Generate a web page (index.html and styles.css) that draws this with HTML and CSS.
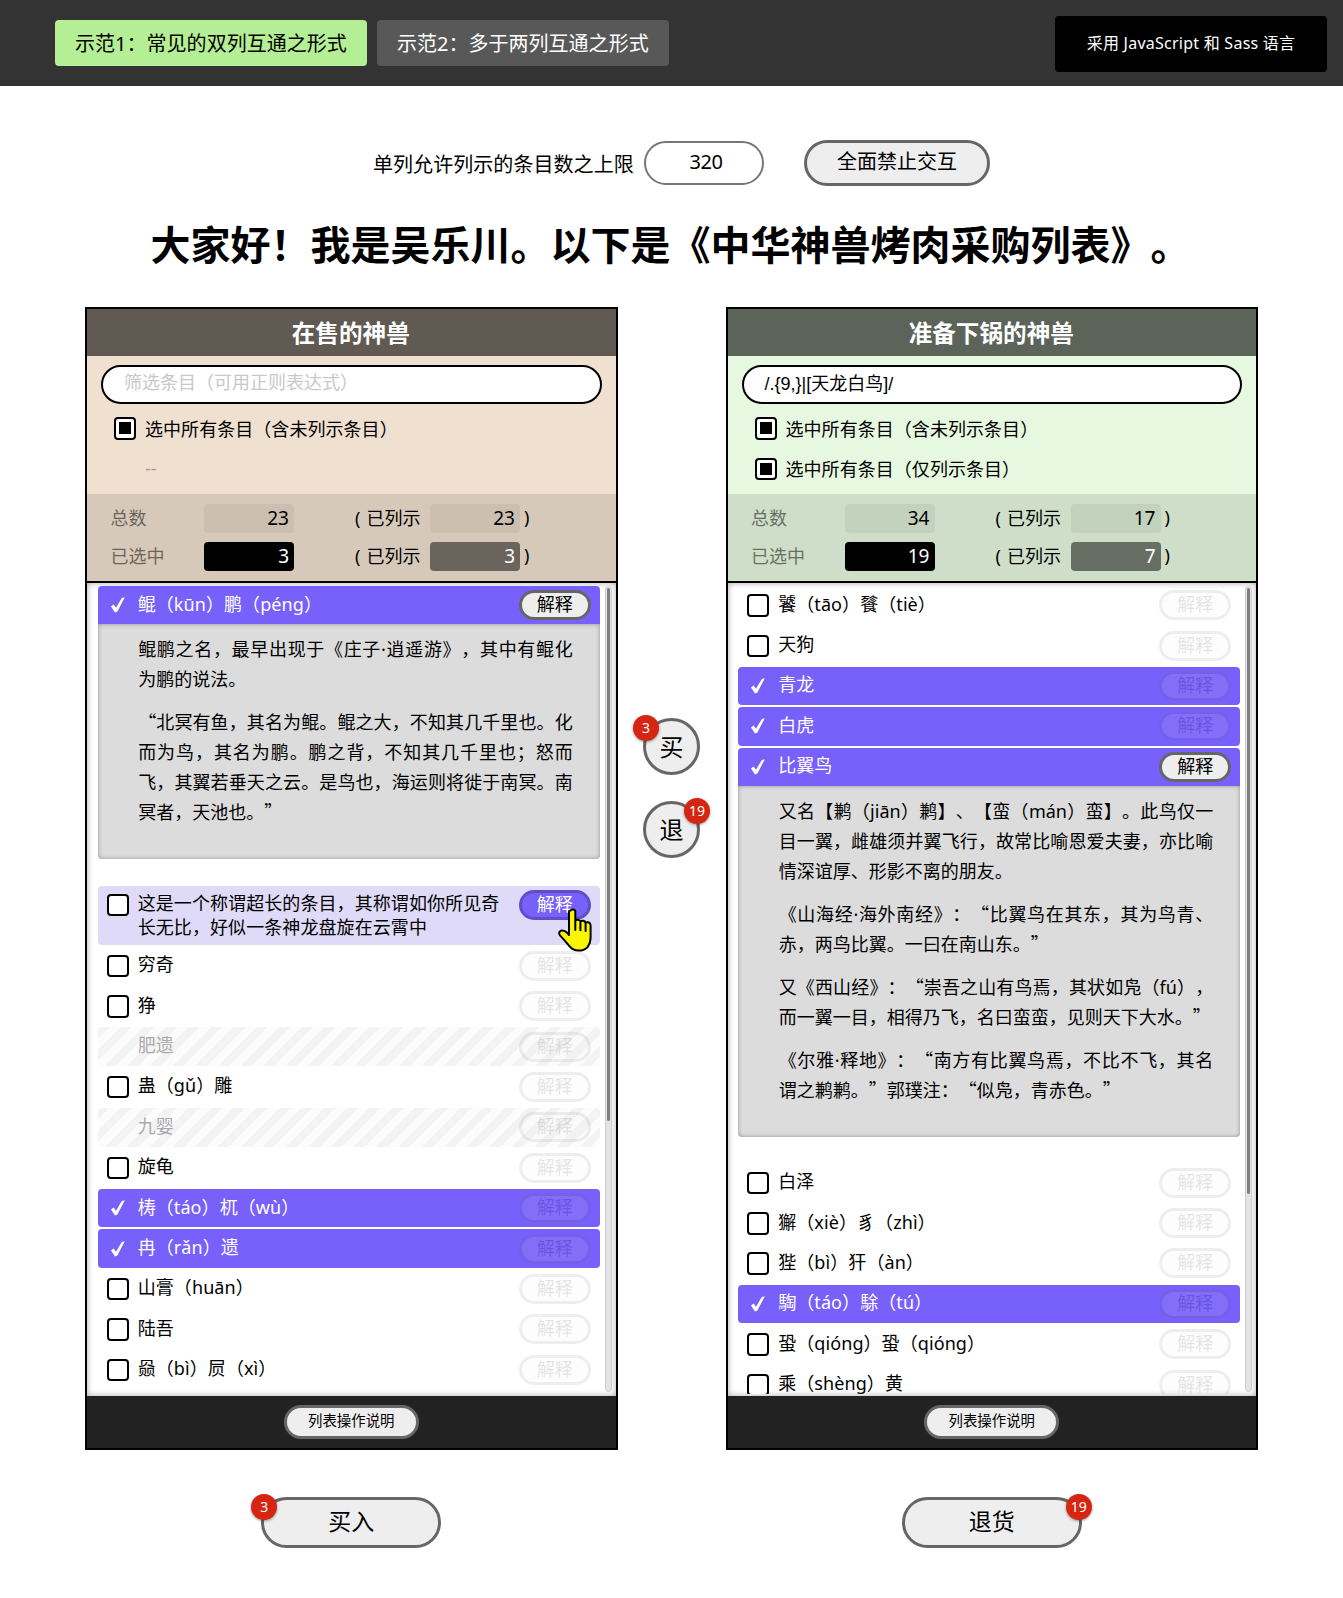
FILE: index.html
```html
<!DOCTYPE html>
<html lang="zh-CN">
<head>
<meta charset="utf-8">
<title>双列互通列表</title>
<link rel="stylesheet" href="styles.css">
</head>
<body>
<header class="topbar">
  <nav class="tabs">
    <a class="tab tab-active">示范1：常见的双列互通之形式</a>
    <a class="tab">示范2：多于两列互通之形式</a>
  </nav>
  <div class="tech">采用 JavaScript 和 Sass 语言</div>
</header>

<main>
  <div class="settings">
    <span class="settings-label">单列允许列示的条目数之上限</span>
    <div class="limit">320</div>
    <div class="pill toggle">全面禁止交互</div>
  </div>
  <h1 class="headline">大家好！我是吴乐川。以下是《中华神兽烤肉采购列表》。</h1>

  <div class="lists">
    <section class="column">
      <div class="panel panel-source">
        <h2 class="panel-title">在售的神兽</h2>
        <div class="filter">
          <div class="search search-empty">筛选条目（可用正则表达式）</div>
          <div class="check-all"><i class="box box-some"></i><span>选中所有条目（含未列示条目）</span></div>
          <div class="check-all check-none"><i class="box box-hidden"></i><span>--</span></div>
        </div>
        <div class="stats">
          <div class="stat"><span class="stat-name">总数</span><b class="num">23</b><span class="stat-sub">( 已列示</span><b class="num">23</b><span class="close">)</span></div>
          <div class="stat"><span class="stat-name">已选中</span><b class="num num-dark">3</b><span class="stat-sub">( 已列示</span><b class="num num-mid">3</b><span class="close">)</span></div>
        </div>
        <div class="list-area">
          <ul class="list">
            <li class="item selected expanded"><svg class="tick" viewBox="0 0 14 16"><path d="M0 9.6 L2.6 7.6 L5 10.8 L10.8 1 L13.8 0.2 L6.4 14.6 L4 15.6 Z"/></svg><span class="name">鲲（kūn）鹏（péng）</span><span class="pill explain">解释</span></li>
            <li class="desc">
              <p>鲲鹏之名，最早出现于《庄子<span class="latin">·</span>逍遥游》，其中有鲲化为鹏的说法。</p>
              <p>“北冥有鱼，其名为鲲。鲲之大，不知其几千里也。化而为鸟，其名为鹏。鹏之背，不知其几千里也；怒而飞，其翼若垂天之云。是鸟也，海运则将徙于南冥。南冥者，天池也。”</p>
            </li>
            <li class="item hover"><i class="box"></i><span class="name">这是一个称谓超长的条目，其称谓如你所见奇长无比，好似一条神龙盘旋在云霄中</span><span class="pill explain">解释<svg class="pointer" viewBox="0 0 34 44"><path d="M13 2.2 C13.8 1.2 16.6 1.2 17.3 3.2 L17.3 12.5 C18.5 11.4 21.5 11.5 22.4 13.4 C24 12.2 26.8 12.6 27.6 14.6 C29.5 13.6 32.6 14.4 32.6 17.5 L32.6 30 C32.6 34 31.5 36.5 29.8 38.8 C27.5 41.6 24 42.6 20.5 42.6 C16.5 42.6 13.6 41 11.4 38.2 C8.4 34.4 5.4 31 2 27.4 C0.2 25.2 1.5 22.4 4.4 22.6 C7 22.8 9 24.6 11 27 L11 4.2 C11 3.2 12 2.4 13 2.2 Z M17.3 12.5 V22 M22.4 13.4 V22.3 M27.6 14.6 V23"/></svg></span></li>
            <li class="item"><i class="box"></i><span class="name">穷奇</span><span class="pill explain">解释</span></li>
            <li class="item"><i class="box"></i><span class="name">狰</span><span class="pill explain">解释</span></li>
            <li class="item disabled"><i class="box box-hidden"></i><span class="name">肥遗</span><span class="pill explain">解释</span></li>
            <li class="item"><i class="box"></i><span class="name">蛊（gǔ）雕</span><span class="pill explain">解释</span></li>
            <li class="item disabled"><i class="box box-hidden"></i><span class="name">九婴</span><span class="pill explain">解释</span></li>
            <li class="item"><i class="box"></i><span class="name">旋龟</span><span class="pill explain">解释</span></li>
            <li class="item selected"><svg class="tick" viewBox="0 0 14 16"><path d="M0 9.6 L2.6 7.6 L5 10.8 L10.8 1 L13.8 0.2 L6.4 14.6 L4 15.6 Z"/></svg><span class="name">梼（táo）杌（wù）</span><span class="pill explain">解释</span></li>
            <li class="item selected"><svg class="tick" viewBox="0 0 14 16"><path d="M0 9.6 L2.6 7.6 L5 10.8 L10.8 1 L13.8 0.2 L6.4 14.6 L4 15.6 Z"/></svg><span class="name">冉（rǎn）遗</span><span class="pill explain">解释</span></li>
            <li class="item"><i class="box"></i><span class="name">山膏（huān）</span><span class="pill explain">解释</span></li>
            <li class="item"><i class="box"></i><span class="name">陆吾</span><span class="pill explain">解释</span></li>
            <li class="item"><i class="box"></i><span class="name">赑（bì）屃（xì）</span><span class="pill explain">解释</span></li>
          </ul>
          <div class="track"><div class="thumb" style="height:66.4%"></div></div>
        </div>
        <footer class="panel-foot"><span class="pill help">列表操作说明</span></footer>
      </div>
      <div class="pill action">买入<span class="badge badge-left">3</span></div>
    </section>

    <div class="transfer">
      <div class="round">买<span class="badge badge-left">3</span></div>
      <div class="round">退<span class="badge badge-right">19</span></div>
    </div>

    <section class="column">
      <div class="panel panel-target">
        <h2 class="panel-title">准备下锅的神兽</h2>
        <div class="filter">
          <div class="search">/.{9,}|[天龙白鸟]/</div>
          <div class="check-all"><i class="box box-some"></i><span>选中所有条目（含未列示条目）</span></div>
          <div class="check-all"><i class="box box-some"></i><span>选中所有条目（仅列示条目）</span></div>
        </div>
        <div class="stats">
          <div class="stat"><span class="stat-name">总数</span><b class="num">34</b><span class="stat-sub">( 已列示</span><b class="num">17</b><span class="close">)</span></div>
          <div class="stat"><span class="stat-name">已选中</span><b class="num num-dark">19</b><span class="stat-sub">( 已列示</span><b class="num num-mid">7</b><span class="close">)</span></div>
        </div>
        <div class="list-area">
          <ul class="list">
            <li class="item"><i class="box"></i><span class="name">饕（tāo）餮（tiè）</span><span class="pill explain">解释</span></li>
            <li class="item"><i class="box"></i><span class="name">天狗</span><span class="pill explain">解释</span></li>
            <li class="item selected"><svg class="tick" viewBox="0 0 14 16"><path d="M0 9.6 L2.6 7.6 L5 10.8 L10.8 1 L13.8 0.2 L6.4 14.6 L4 15.6 Z"/></svg><span class="name">青龙</span><span class="pill explain">解释</span></li>
            <li class="item selected"><svg class="tick" viewBox="0 0 14 16"><path d="M0 9.6 L2.6 7.6 L5 10.8 L10.8 1 L13.8 0.2 L6.4 14.6 L4 15.6 Z"/></svg><span class="name">白虎</span><span class="pill explain">解释</span></li>
            <li class="item selected expanded"><svg class="tick" viewBox="0 0 14 16"><path d="M0 9.6 L2.6 7.6 L5 10.8 L10.8 1 L13.8 0.2 L6.4 14.6 L4 15.6 Z"/></svg><span class="name">比翼鸟</span><span class="pill explain">解释</span></li>
            <li class="desc">
              <p>又名【鹣（<span class="latin">jiān</span>）鹣】、【蛮（<span class="latin">mán</span>）蛮】。此鸟仅一目一翼，雌雄须并翼飞行，故常比喻恩爱夫妻，亦比喻情深谊厚、形影不离的朋友。</p>
              <p>《山海经<span class="latin">·</span>海外南经》：“比翼鸟在其东，其为鸟青、赤，两鸟比翼。一曰在南山东。”</p>
              <p>又《西山经》：“崇吾之山有鸟焉，其状如凫（<span class="latin">fú</span>），而一翼一目，相得乃飞，名曰蛮蛮，见则天下大水。”</p>
              <p>《尔雅<span class="latin">·</span>释地》：“南方有比翼鸟焉，不比不飞，其名谓之鹣鹣。”郭璞注：“似凫，青赤色。”</p>
            </li>
            <li class="item"><i class="box"></i><span class="name">白泽</span><span class="pill explain">解释</span></li>
            <li class="item"><i class="box"></i><span class="name">獬（xiè）豸（zhì）</span><span class="pill explain">解释</span></li>
            <li class="item"><i class="box"></i><span class="name">狴（bì）犴（àn）</span><span class="pill explain">解释</span></li>
            <li class="item selected"><svg class="tick" viewBox="0 0 14 16"><path d="M0 9.6 L2.6 7.6 L5 10.8 L10.8 1 L13.8 0.2 L6.4 14.6 L4 15.6 Z"/></svg><span class="name">騊（táo）駼（tú）</span><span class="pill explain">解释</span></li>
            <li class="item"><i class="box"></i><span class="name">蛩（qióng）蛩（qióng）</span><span class="pill explain">解释</span></li>
            <li class="item"><i class="box"></i><span class="name">乘（shèng）黄</span><span class="pill explain">解释</span></li>
          </ul>
          <div class="track"><div class="thumb" style="height:75.6%"></div></div>
        </div>
        <footer class="panel-foot"><span class="pill help">列表操作说明</span></footer>
      </div>
      <div class="pill action">退货<span class="badge badge-right">19</span></div>
    </section>
  </div>
</main>
</body>
</html>
```
FILE: styles.css
```css
* { box-sizing: border-box; }

body {
  margin: 0;
  background: #fff;
  color: #000;
  font-family: "Noto Sans", "Noto Sans CJK SC", sans-serif;
  font-size: 18px;
  text-spacing-trim: space-all;
}

.topbar {
  height: 86px;
  padding: 0 16px 0 55px;
  display: flex;
  align-items: center;
  justify-content: space-between;
  background: #333;
  color: #fff;
}

.tabs { display: flex; gap: 10px; }

.tab {
  height: 46px;
  padding: 0 20px;
  border-radius: 4px;
  background: #585858;
  font-size: 20px;
  line-height: 47px;
  letter-spacing: 0.03px;
}

.tab-active { background: #b5ef95; color: #000; }

.tech {
  width: 272px;
  height: 56px;
  margin-top: 2px;
  border-radius: 4px;
  background: #000;
  font-size: 16px;
  line-height: 55px;
  text-align: center;
  letter-spacing: 0.25px;
}

.pill {
  border: 3px solid #666;
  border-radius: 30px;
  background: #eee;
  color: #000;
  text-align: center;
}

.settings {
  padding: 54px 0 0 373px;
  display: flex;
  align-items: center;
  font-size: 20px;
}

.settings-label { width: 271px; letter-spacing: 0.06px; }

.limit {
  width: 120px;
  height: 44px;
  padding-left: 4px;
  border: 2px solid #767676;
  border-radius: 22px;
  line-height: 38px;
  text-align: center;
  letter-spacing: -0.5px;
}

.toggle {
  width: 186px;
  height: 46px;
  margin-left: 40px;
  line-height: 37px;
}

.headline {
  height: 121px;
  margin: 0;
  padding-right: 2px;
  font-size: 40px;
  font-weight: 700;
  line-height: 117px;
  text-align: center;
}

.lists {
  width: 1173px;
  margin: 0 auto;
  display: flex;
  justify-content: space-between;
}

.column {
  width: 532.5px;
  display: flex;
  flex-direction: column;
  align-items: center;
}

.panel { width: 100%; border: 2px solid #000; }

.panel-source { background: #f0e0d0; }
.panel-target { background: #e6f8df; }

.panel-title {
  height: 47px;
  margin: 0;
  padding-right: 1px;
  background: rgba(0, 0, 0, 0.6);
  color: #fff;
  font-size: 23.6px;
  font-weight: 700;
  line-height: 48px;
  text-align: center;
}

.filter { height: 138px; padding: 9px 14px 0; }

.search {
  height: 39px;
  margin-bottom: 4px;
  padding-left: 21px;
  border: 2px solid #000;
  border-radius: 20px;
  background: #fff;
  font-family: "Liberation Sans", "Noto Sans CJK SC", sans-serif;
  line-height: 35px;
}

.search-empty { color: #c8c8c8; line-height: 33px; }

.check-all {
  height: 40.5px;
  padding-left: 13px;
  display: flex;
  align-items: center;
  gap: 9px;
}

.check-all span { margin-top: -1px; letter-spacing: 0.05px; }
.check-none { color: #a89d92; }

.box {
  width: 22px;
  height: 22.5px;
  flex: none;
  border: 2px solid #000;
  border-radius: 4px;
  background: #fff;
}

.box-some { background: linear-gradient(#000, #000) center / 12px 12px no-repeat #fff; }
.box-hidden { visibility: hidden; }

.stats {
  height: 89px;
  padding: 6px 0 0 23.5px;
  border-bottom: 2px solid #000;
  background: rgba(0, 0, 0, 0.1);
}

.stat {
  height: 37.5px;
  display: flex;
  align-items: center;
}

.stat-name { width: 93.5px; opacity: 0.5; }
.stat-sub { width: 75px; margin-left: 61px; word-spacing: 1.5px; }
.stat-name, .stat-sub, .close { margin-top: -3px; }
.close { margin-left: 4px; }

.num {
  width: 90px;
  height: 29px;
  padding-right: 5px;
  border-radius: 4px;
  background: rgba(0, 0, 0, 0.05);
  font-size: 19px;
  font-weight: 400;
  line-height: 28px;
  text-align: right;
}

.num-dark { background: #000; color: #fff; }
.num-mid { background: rgba(0, 0, 0, 0.5); color: #fff; }

.list-area {
  height: 813px;
  padding: 3px 4px 2px 10.7px;
  display: flex;
  justify-content: space-between;
  background: #fff;
  box-shadow: inset 0 0 6px rgba(0, 0, 0, 0.35);
}

.list {
  width: 502px;
  height: 808px;
  margin: 0;
  padding: 0;
  overflow: hidden;
  list-style: none;
}

.item {
  min-height: 38.4px;
  margin-bottom: 2px;
  padding: 4.2px 9px;
  display: flex;
  align-items: flex-start;
  border-radius: 4px;
}

.item .box { margin-top: 4px; }

.name {
  width: 372px;
  margin: 1.5px auto 0 9px;
  padding-bottom: 1.2px;
  line-height: 24px;
  letter-spacing: 0.08px;
}

.tick {
  width: 14px;
  height: 16px;
  margin: 7px 4px 0 4px;
  flex: none;
  fill: #fff;
}

.explain {
  position: relative;
  width: 72px;
  height: 30px;
  flex: none;
  line-height: 22px;
  opacity: 0.1;
}

.selected { background: #7860fa; color: #fff; }

.expanded { margin-bottom: 0; border-radius: 4px 4px 0 0; }
.expanded .explain { opacity: 1; }

.hover { background: #dfdaf7; }

.hover .explain {
  border-color: #604dc8;
  background: #7860fa;
  color: #fff;
  opacity: 1;
}

.pointer {
  position: absolute;
  left: 36px;
  top: 15px;
  width: 34px;
  height: 44px;
  z-index: 2;
  fill: #faf500;
  stroke: #000;
  stroke-width: 2;
  stroke-linecap: round;
  stroke-linejoin: round;
}

.disabled {
  background: repeating-linear-gradient(135deg, #f3f3f3 0 8px, #fcfcfc 8px 16px);
  color: #aaa;
}

.desc {
  margin-bottom: 27px;
  padding: 8.8px 27px 19px 40.5px;
  border-radius: 0 0 4px 4px;
  background: #dcdcdc;
  box-shadow: inset 0 0 4px rgba(0, 0, 0, 0.35);
  font-family: "Noto Sans CJK SC", sans-serif;
  line-height: 30px;
  text-align: justify;
}

.desc p { margin: 0 0 13.2px; }

.latin { font-family: "Noto Sans", sans-serif; line-height: 1; }

.track {
  width: 7px;
  height: 806px;
  padding: 1px;
  border: 1px solid #ccc;
  border-radius: 4px;
  background: #e4e4e4;
}

.thumb { border-radius: 2px; background: #808080; }

.panel-foot {
  height: 52px;
  display: flex;
  align-items: center;
  justify-content: center;
  background: #222;
}

.help {
  width: 135px;
  height: 34px;
  font-size: 14.4px;
  line-height: 25px;
}

.action {
  position: relative;
  width: 180px;
  height: 51px;
  margin-top: 47px;
  font-size: 23px;
  line-height: 43px;
}

.transfer {
  width: 57px;
  padding-top: 411px;
  display: flex;
  flex-direction: column;
  gap: 26px;
}

.round {
  position: relative;
  width: 57px;
  height: 57px;
  border: 3px solid #666;
  border-radius: 50%;
  background: #eee;
  font-size: 24px;
  line-height: 52px;
  text-align: center;
}

.badge {
  position: absolute;
  width: 26px;
  height: 26px;
  border-radius: 50%;
  background: #d42612;
  box-shadow: 0 1px 3px rgba(0, 0, 0, 0.4);
  color: #fff;
  font-size: 14px;
  line-height: 25px;
  text-align: center;
}

.action .badge { top: -6px; }
.action .badge-left { left: -13px; }
.action .badge-right { right: -13px; }
.round .badge { top: -6px; }
.round .badge-left { left: -13px; }
.round .badge-right { right: -13px; }
```
